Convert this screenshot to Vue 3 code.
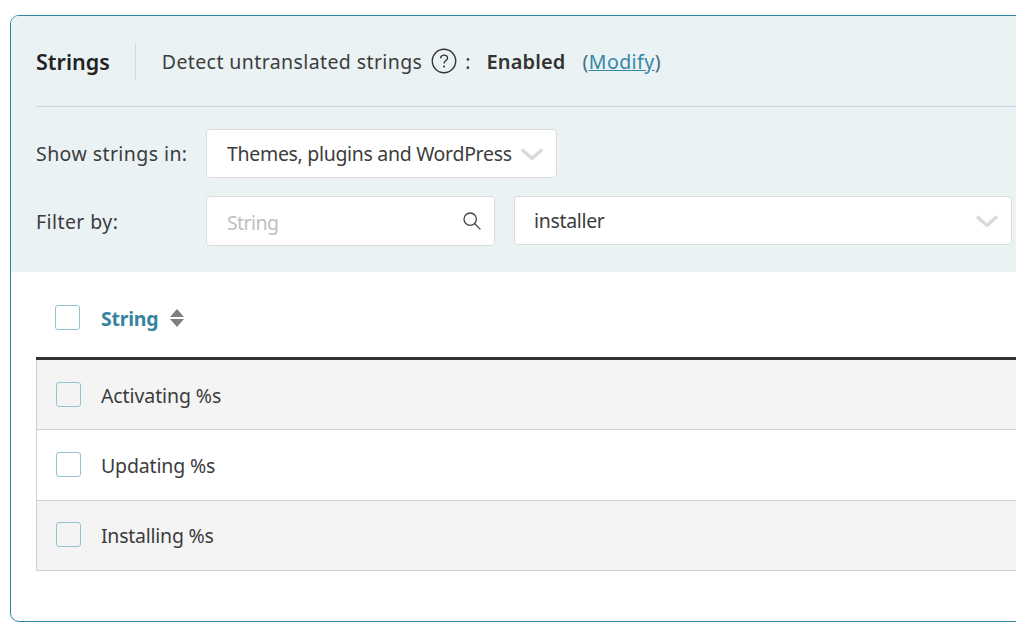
<script setup>
const rows = ['Activating %s', 'Updating %s', 'Installing %s']
</script>

<template>
  <div class="page">
    <section class="panel">
      <div class="head">
        <div class="top">
          <strong class="title">Strings</strong>
          <span class="vr"></span>
          <span class="detect">Detect untranslated strings</span>
          <svg class="help" width="26" height="26" viewBox="0 0 26 26" aria-hidden="true">
            <circle cx="13" cy="13" r="11.7" fill="none" stroke="#333" stroke-width="1.4" />
            <path d="M9.6 10.2c.2-2 1.6-3.1 3.5-3.1 2 0 3.4 1.2 3.4 2.9 0 1.4-.8 2.1-1.8 2.8-1 .7-1.6 1.2-1.6 2.6" fill="none" stroke="#333" stroke-width="1.4" />
            <circle cx="13.1" cy="18.6" r="1" fill="#333" />
          </svg>
          <span class="colon">:</span>
          <strong class="enabled">Enabled</strong>
          <span class="modify">(<a class="link">Modify</a>)</span>
        </div>
        <div class="row show">
          <label class="lbl">Show strings in:</label>
          <div class="box sel-a">
            <span class="sel-text">Themes, plugins and WordPress</span>
            <svg class="chev" width="22" height="12" viewBox="0 0 22 12"><path d="M1 1.5l10 9 10-9" fill="none" stroke="#dadada" stroke-width="3.4" /></svg>
          </div>
        </div>
        <div class="row filter">
          <label class="lbl">Filter by:</label>
          <div class="box search">
            <span class="ph">String</span>
            <svg width="20" height="20" viewBox="0 0 20 20"><circle cx="8.2" cy="8.2" r="6.2" fill="none" stroke="#444" stroke-width="1.3" /><path d="M12.8 12.8l5.6 5.6" stroke="#444" stroke-width="1.3" /></svg>
          </div>
          <div class="box sel-b">
            <span class="inst">installer</span>
            <svg class="chev" width="22" height="12" viewBox="0 0 22 12"><path d="M1 1.5l10 9 10-9" fill="none" stroke="#dadada" stroke-width="3.4" /></svg>
          </div>
        </div>
      </div>
      <div class="body">
        <div class="thead">
          <span class="cb cb-h"></span>
          <span class="th">String</span>
          <svg class="sort" width="16" height="20" viewBox="0 0 16 20"><path d="M8 1l7 8H1z M8 19l-7-8h14z" fill="#7f7f7f" /></svg>
        </div>
        <div class="tbody">
          <div v-for="(r, i) in rows" :key="r" class="tr" :class="['r' + i, { odd: i % 2 === 0 }]">
            <span class="cb"></span>
            <span class="cell">{{ r }}</span>
          </div>
        </div>
      </div>
    </section>
  </div>
</template>

<style>
html, body { margin: 0; background: #fff; }
</style>

<style scoped>
.page {
  width: 1016px;
  height: 643px;
  overflow: hidden;
  padding: 15px 0 0 10px;
  box-sizing: border-box;
  font-family: "Noto Sans", "Open Sans", sans-serif;
  font-size: 19.5px;
  color: #3c3c3c;
  white-space: nowrap;
}
.panel {
  width: 1100px;
  height: 607px;
  box-sizing: border-box;
  border: 1px solid #2f86a0;
  border-radius: 9px;
  overflow: hidden;
  background: #fff;
}
.head {
  background: #eaf2f4;
  height: 256px;
  padding: 0 0 0 25px;
  box-sizing: border-box;
}
.top {
  height: 91px;
  border-bottom: 1px solid #c5dbe4;
  display: flex;
  align-items: center;
  box-sizing: border-box;
}
.title { font-size: 21.5px; font-weight: 600; color: #222; }
.vr { width: 1px; height: 37px; background: #ccdbe1; margin: 0 26px 0 25px; }
.detect { letter-spacing: 0.4px; }
.help { margin-left: 9px; }
.colon { margin-left: 8px; }
.enabled { margin-left: 16px; font-size: 20px; font-weight: 600; color: #333; letter-spacing: 0.12px; }
.modify { margin-left: 17px; color: #3a6f85; letter-spacing: 0.45px; }
.link { color: #3688a6; text-decoration: underline; }
.row { display: flex; align-items: center; }
.lbl { width: 170px; flex: none; letter-spacing: 0.42px; }
.show { margin-top: 22px; }
.filter { margin-top: 18px; }
.box {
  background: #fff;
  border: 1px solid #dcdcdc;
  border-radius: 4px;
  box-sizing: border-box;
  display: flex;
  align-items: center;
  justify-content: space-between;
  padding: 0 13px 0 20px;
  color: #3c3c3c;
}
.sel-a { width: 351px; height: 49px; }
.search { width: 289px; height: 50px; padding-right: 12px; }
.sel-b { width: 498px; height: 49px; margin-left: 19px; align-self: flex-start; }
.sel-text { letter-spacing: -0.31px; }
.inst { letter-spacing: -0.33px; margin-left: -1px; }
.ph { color: #c0c0c0; letter-spacing: -0.6px; padding-top: 2px; }
.thead {
  height: 88px;
  margin-left: 25px;
  display: flex;
  align-items: center;
  border-bottom: 3px solid #333;
  box-sizing: border-box;
  padding: 6px 0 0 19px;
}
.th { margin-left: 21px; font-weight: 700; color: #37839f; letter-spacing: -0.25px; padding-top: 2px; }
.sort { margin-left: 11px; }
.cb {
  width: 25px;
  height: 25px;
  border: 1px solid #93c2d2;
  border-radius: 3px;
  box-sizing: border-box;
  background: transparent;
  flex: none;
}
.tbody { margin-left: 25px; border-left: 1px solid #cfcfcf; }
.tr {
  height: 70px;
  border-bottom: 1px solid #cfcfcf;
  box-sizing: border-box;
  display: flex;
  align-items: center;
  padding-left: 19px;
  gap: 20px;
}
.cell { padding-top: 2px; }
.r0 .cell { letter-spacing: -0.1px; }
.r1 { height: 71px; padding-bottom: 1px; }
.r1 .cell { letter-spacing: -0.15px; }
.r2 { padding-bottom: 2px; }
.r2 .cell { letter-spacing: -0.25px; }
.odd { background: #f4f4f4; }
</style>
